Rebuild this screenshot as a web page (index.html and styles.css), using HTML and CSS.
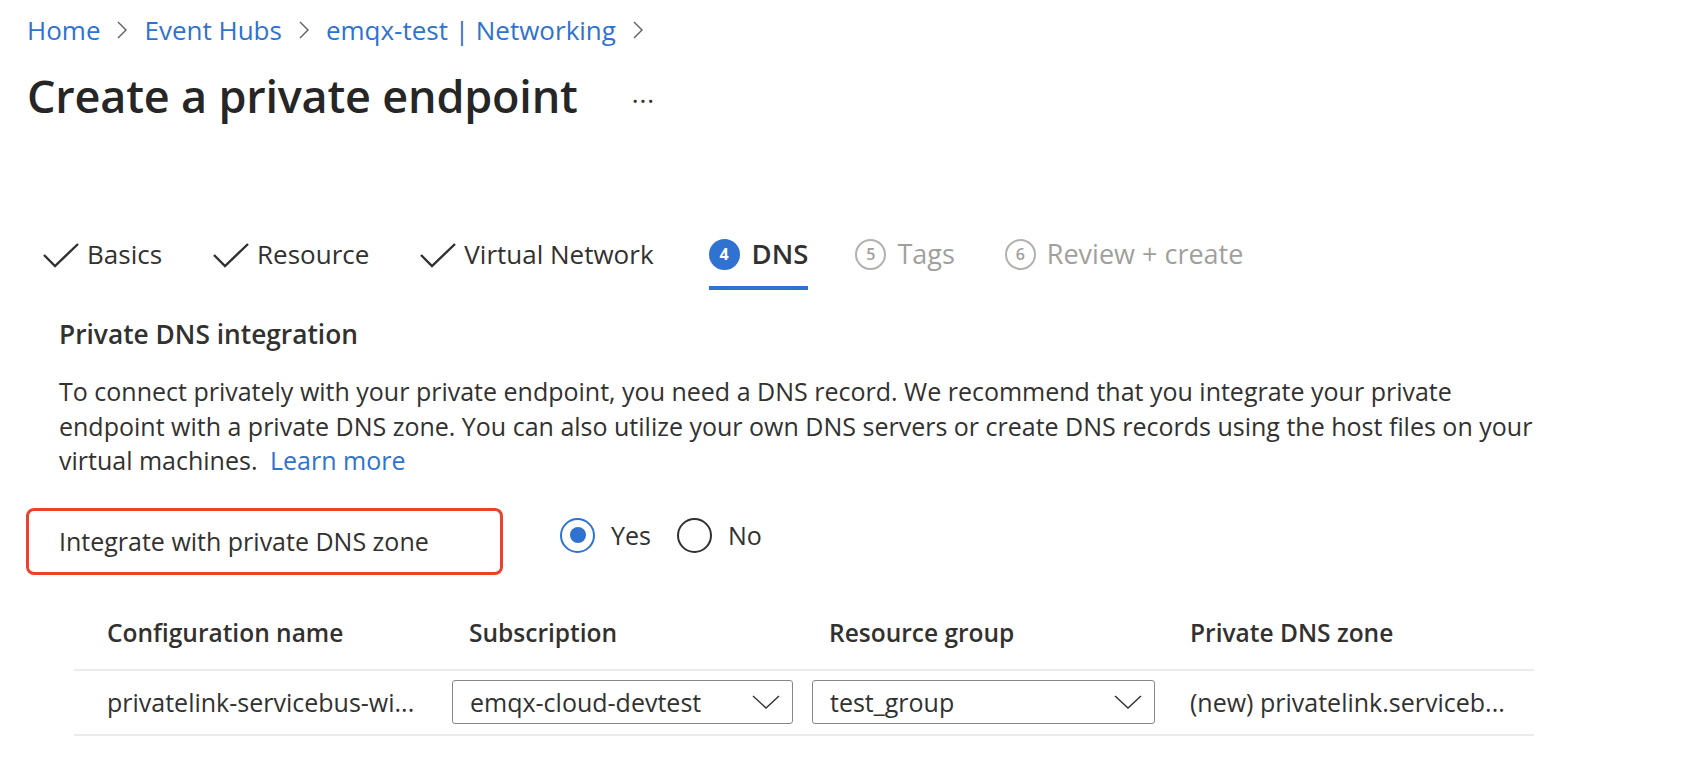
FILE: index.html
```html
<!DOCTYPE html>
<html lang="en">
<head>
<meta charset="utf-8">
<title>Create a private endpoint</title>
<link rel="stylesheet" href="styles.css">
</head>
<body>
<div class="page">
  <nav class="breadcrumb">
    <a class="crumb" href="#">Home</a>
    <svg class="sep" viewBox="0 0 12 20" width="12" height="20"><path d="M2 2 L10 10 L2 18" fill="none" stroke="#605e5c" stroke-width="1.4"/></svg>
    <a class="crumb" href="#">Event Hubs</a>
    <svg class="sep" viewBox="0 0 12 20" width="12" height="20"><path d="M2 2 L10 10 L2 18" fill="none" stroke="#605e5c" stroke-width="1.4"/></svg>
    <a class="crumb" href="#">emqx-test | Networking</a>
    <svg class="sep" viewBox="0 0 12 20" width="12" height="20"><path d="M2 2 L10 10 L2 18" fill="none" stroke="#605e5c" stroke-width="1.4"/></svg>
  </nav>

  <header class="title-row">
    <h1 class="title">Create a private endpoint</h1>
    <span class="more">···</span>
  </header>

  <div class="tabs">
    <div class="tab done">
      <svg class="check" viewBox="0 0 38 26" width="38" height="26"><path d="M2 13 L13 24 L36 2" fill="none" stroke="#323130" stroke-width="2.4"/></svg>
      <span>Basics</span>
    </div>
    <div class="tab done">
      <svg class="check" viewBox="0 0 38 26" width="38" height="26"><path d="M2 13 L13 24 L36 2" fill="none" stroke="#323130" stroke-width="2.4"/></svg>
      <span>Resource</span>
    </div>
    <div class="tab done">
      <svg class="check" viewBox="0 0 38 26" width="38" height="26"><path d="M2 13 L13 24 L36 2" fill="none" stroke="#323130" stroke-width="2.4"/></svg>
      <span>Virtual Network</span>
    </div>
    <div class="tab active">
      <span class="num">4</span>
      <span>DNS</span>
    </div>
    <div class="tab todo">
      <span class="num">5</span>
      <span>Tags</span>
    </div>
    <div class="tab todo">
      <span class="num">6</span>
      <span>Review + create</span>
    </div>
  </div>

  <section class="content">
    <h2 class="heading">Private DNS integration</h2>
    <p class="desc"><span>To connect privately with your private endpoint, you need a DNS record. We recommend that you integrate your private endpoint with a private DNS zone. You can also utilize your own DNS servers or create DNS records using the host files on your virtual machines.</span> <a class="link" href="#">Learn more</a></p>

    <div class="field-row">
      <div class="field-label">Integrate with private DNS zone</div>
      <div class="radios">
        <label class="radio">
          <span class="dot on"></span>
          <span>Yes</span>
        </label>
        <label class="radio">
          <span class="dot"></span>
          <span>No</span>
        </label>
      </div>
    </div>

    <div class="grid">
      <div class="hcell first">Configuration name</div>
      <div class="hcell inset">Subscription</div>
      <div class="hcell inset">Resource group</div>
      <div class="hcell">Private DNS zone</div>

      <div class="cell first">privatelink-servicebus-wi...</div>
      <div class="cell">
        <div class="select sub">
          <span>emqx-cloud-devtest</span>
          <svg viewBox="0 0 28 16" width="28" height="16"><path d="M1 2 L14 14 L27 2" fill="none" stroke="#323130" stroke-width="1.4"/></svg>
        </div>
      </div>
      <div class="cell">
        <div class="select rg">
          <span>test_group</span>
          <svg viewBox="0 0 28 16" width="28" height="16"><path d="M1 2 L14 14 L27 2" fill="none" stroke="#323130" stroke-width="1.4"/></svg>
        </div>
      </div>
      <div class="cell">(new) privatelink.serviceb...</div>
    </div>
  </section>
</div>
</body>
</html>
```

FILE: styles.css
```css
* { box-sizing: border-box; }

html, body {
  margin: 0;
  padding: 0;
  background: #ffffff;
}

body {
  font-family: "Open Sans", "Noto Sans", "Liberation Sans", sans-serif;
  color: #323130;
}

.page {
  padding: 12px 0 0 27px;
}

.breadcrumb {
  display: flex;
  align-items: center;
  gap: 16px;
  height: 36px;
  font-size: 26px;
}

.crumb {
  color: #2f72cf;
  text-decoration: none;
}

.sep {
  display: block;
}

.title-row {
  display: flex;
  align-items: center;
  gap: 54px;
  margin-top: 20px;
  height: 56px;
}

.title {
  margin: 0;
  font-size: 45px;
  font-weight: 600;
  line-height: 56px;
  color: #262626;
  letter-spacing: -0.2px;
}

.more {
  font-size: 26px;
  line-height: 1;
  color: #323130;
  letter-spacing: 1px;
  padding-top: 8px;
}

.tabs {
  display: flex;
  gap: 50px;
  margin-top: 114px;
  padding-left: 15px;
  height: 52px;
  font-size: 26px;
}

.tab {
  display: flex;
  align-items: center;
  gap: 7px;
  height: 52px;
  padding-bottom: 16px;
  border-bottom: 4px solid transparent;
  line-height: 36px;
}

.tab.active {
  border-bottom-color: #2f72cf;
  font-size: 27.5px;
  font-weight: 600;
  gap: 12px;
  margin-left: 5px;
  margin-right: -3px;
}

.tab.todo {
  color: #a19f9d;
  font-size: 27px;
  gap: 11px;
}

.check {
  display: block;
  margin-top: 2px;
}

.num {
  display: flex;
  align-items: center;
  justify-content: center;
  width: 31px;
  height: 31px;
  border-radius: 50%;
  font-size: 16px;
  font-weight: 700;
  line-height: 1;
}

.tab.active .num {
  background: #2f72cf;
  color: #ffffff;
}

.tab.todo .num {
  border: 2px solid #b3b0ad;
  color: #a19f9d;
  font-weight: 600;
}

.content {
  padding-left: 32px;
}

.heading {
  margin: 27px 0 0;
  font-size: 26.3px;
  font-weight: 600;
  line-height: 34px;
}

.desc {
  margin: 23px 0 0;
  width: 1492px;
  font-size: 25px;
  line-height: 34.5px;
}

.link {
  color: #2f72cf;
  text-decoration: none;
  margin-left: 6px;
}

.field-row {
  display: flex;
  align-items: flex-start;
  margin-top: 30px;
  margin-left: -33px;
}

.field-label {
  width: 477px;
  height: 67px;
  display: flex;
  align-items: center;
  padding-left: 30px;
  border: 3px solid #e8432b;
  border-radius: 8px;
  font-size: 25px;
}

.radios {
  display: flex;
  gap: 26px;
  margin-left: 57px;
  margin-top: 10px;
}

.radio {
  display: flex;
  align-items: center;
  gap: 16px;
  font-size: 25px;
}

.dot {
  width: 35px;
  height: 35px;
  border-radius: 50%;
  border: 2px solid #323130;
  display: flex;
  align-items: center;
  justify-content: center;
}

.dot.on {
  border-color: #2f72cf;
}

.dot.on::after {
  content: "";
  width: 16px;
  height: 16px;
  border-radius: 50%;
  background: #2f72cf;
}

.grid {
  display: grid;
  grid-template-columns: 378px 360px 378px 1fr;
  width: 1460px;
  margin: 36px 0 0 15px;
  font-size: 25px;
}

.hcell {
  font-size: 24.5px;
  font-weight: 600;
  line-height: 44px;
  padding-bottom: 14px;
  border-bottom: 2px solid #ebebeb;
}

.hcell.first, .cell.first {
  padding-left: 33px;
}

.hcell.inset {
  padding-left: 17px;
}

.cell {
  height: 65px;
  display: flex;
  align-items: center;
  border-bottom: 2px solid #ebebeb;
  padding-bottom: 1px;
}

.select {
  height: 44px;
  display: flex;
  align-items: center;
  justify-content: space-between;
  padding: 0 12px 0 17px;
  border: 1px solid #8a8886;
  border-radius: 3px;
}

.select.sub { width: 341px; }
.select.rg { width: 343px; }

.select svg { display: block; }
```
